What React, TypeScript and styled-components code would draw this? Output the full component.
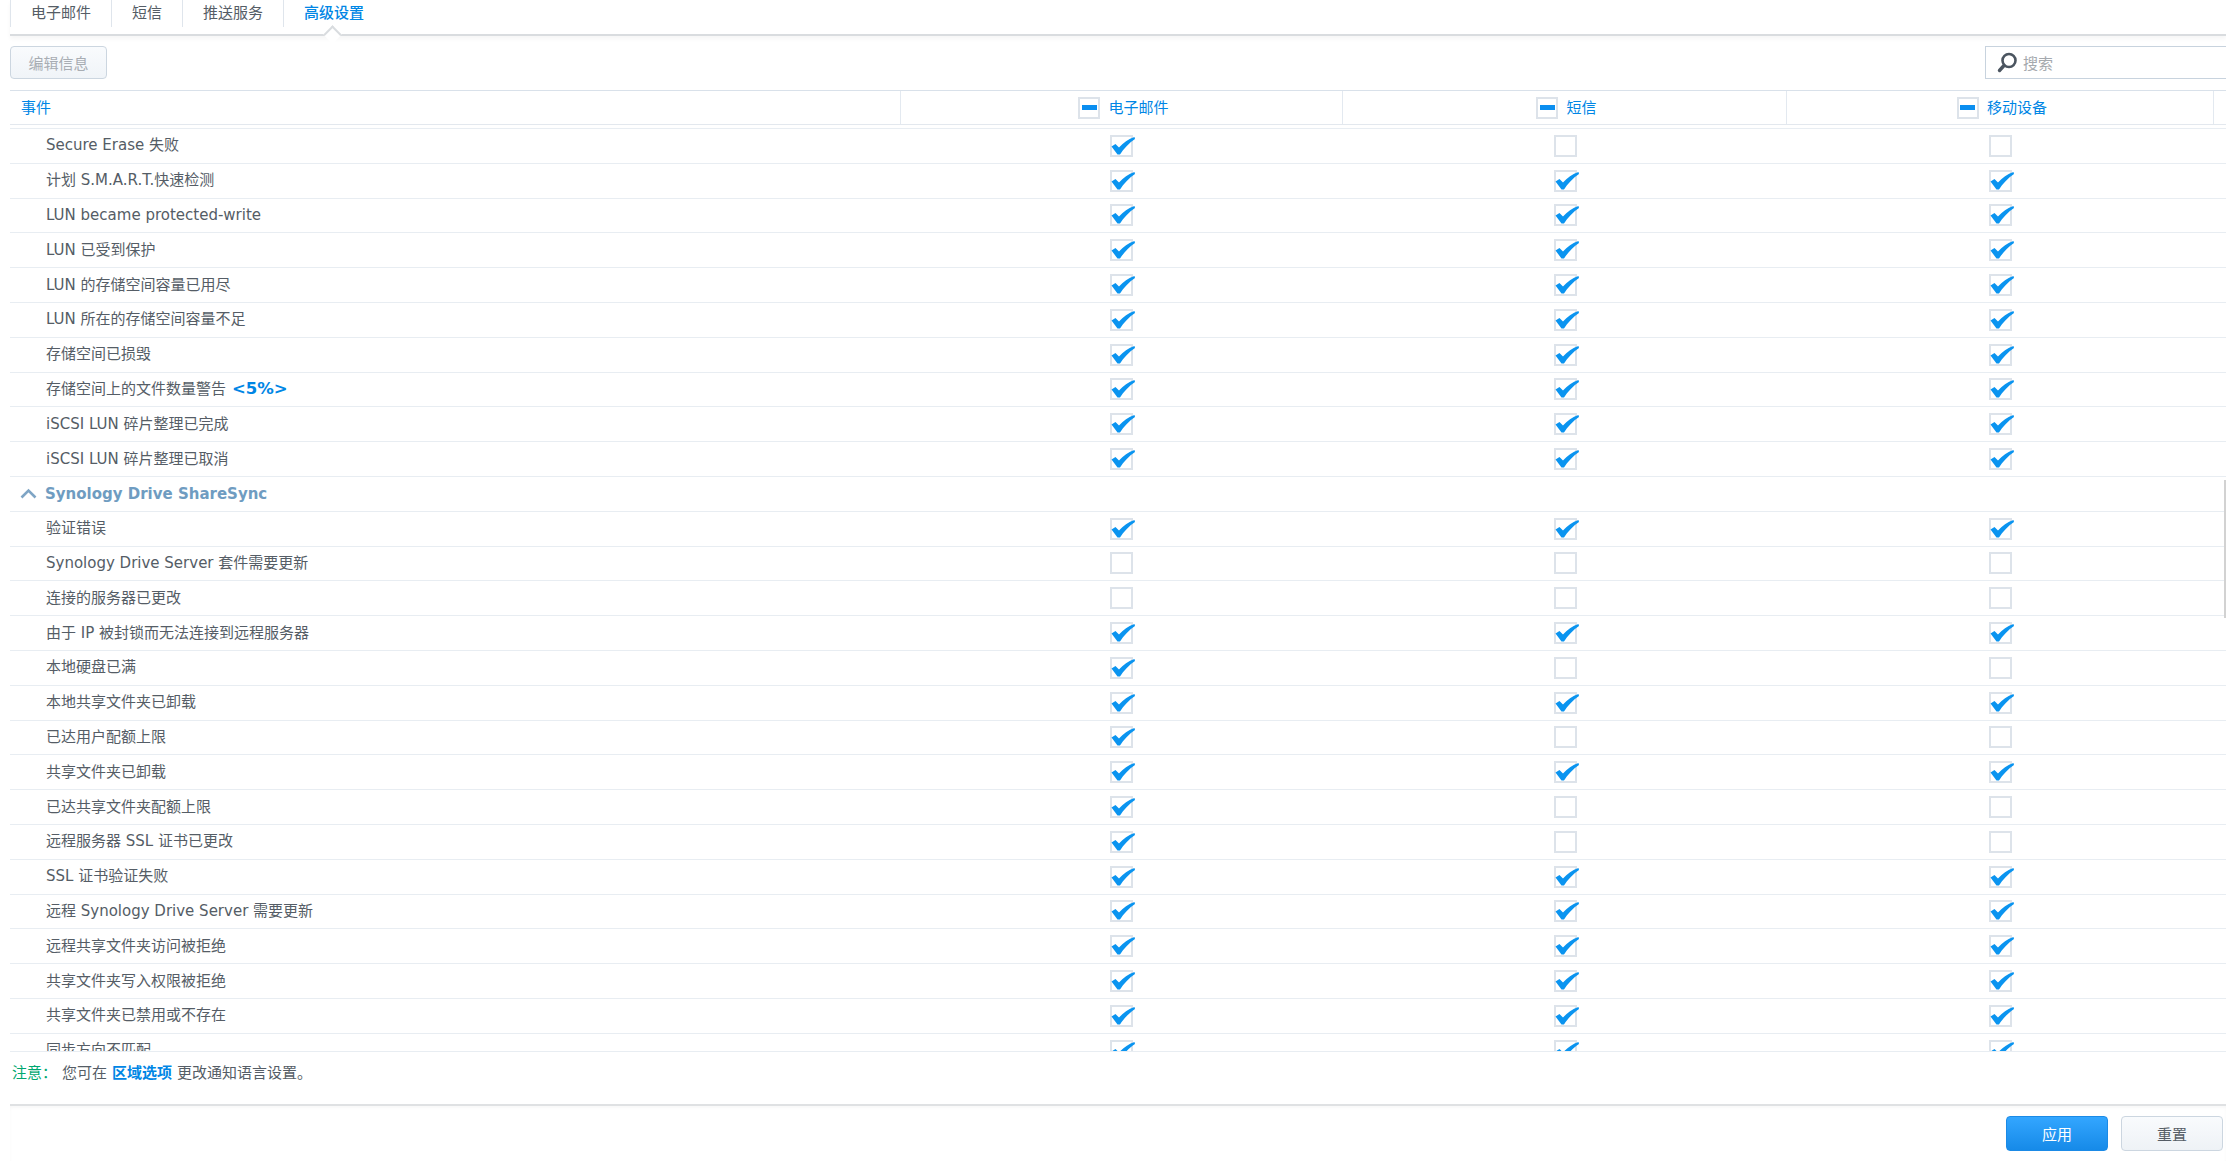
import React from "react";
import styled, { createGlobalStyle } from "styled-components";

const Global = createGlobalStyle`
  html, body { margin: 0; padding: 0; background: #fff; overflow: hidden; }
  * { box-sizing: border-box; }
`;

const FONT = `"DejaVu Sans", "Noto Sans CJK SC", sans-serif`;
const COLS = "891px 442px 444px 427px 1fr";

const Page = styled.div`
  width: 2226px;
  height: 1161px;
  padding-left: 10px;
  display: flex;
  flex-direction: column;
  position: relative;
  overflow: hidden;
  font-family: ${FONT};
  font-size: 15px;
  color: #555d66;
`;

const TabBar = styled.div`
  height: 36px;
  flex: none;
  display: flex;
  align-items: flex-start;
  position: relative;
  border-bottom: 2px solid #d9dcdf;
  box-shadow: 0 3px 4px rgba(0, 0, 0, 0.04);
`;

const Tab = styled.div<{ $active?: boolean }>`
  height: 27px;
  padding: 0 20px 5px;
  display: flex;
  align-items: center;
  border-left: 1px solid #dfe5ec;
  font-size: 15px;
  font-weight: ${(p) => (p.$active ? 500 : 400)};
  color: ${(p) => (p.$active ? "#0086e5" : "#555d66")};
  &:last-of-type { border-right: 1px solid #dfe5ec; }
`;

const Caret = styled.div`
  position: absolute;
  left: 316px;
  bottom: -7px;
  width: 13px;
  height: 13px;
  background: #fff;
  border-left: 2px solid #d9dcdf;
  border-top: 2px solid #d9dcdf;
  transform: rotate(45deg);
`;

const Toolbar = styled.div`
  height: 54px;
  flex: none;
  display: flex;
  align-items: center;
  justify-content: space-between;
  padding-bottom: 2px;
`;

const EditButton = styled.div`
  width: 97px;
  height: 33px;
  display: flex;
  align-items: center;
  justify-content: center;
  border: 1px solid #ccd6e0;
  border-radius: 4px;
  background: linear-gradient(#f9fbfd, #f0f4f8);
  color: #a8adb3;
  font-size: 15px;
`;

const SearchBox = styled.div`
  width: 241px;
  height: 33px;
  display: flex;
  align-items: center;
  gap: 6px;
  padding-left: 11px;
  border: 1px solid #c8d3de;
  border-right: none;
  color: #a5a9ae;
  font-size: 15px;
`;

const HeaderRow = styled.div`
  height: 35px;
  flex: none;
  display: grid;
  grid-template-columns: ${COLS};
  border-top: 1px solid #d9e1ea;
  border-bottom: 1px solid #e3e8ee;
`;

const HeaderLead = styled.div`
  display: flex;
  align-items: center;
  padding: 0 0 2px 11px;
  font-size: 15px;
  color: #0086e5;
  border-right: 1px solid #e3e9f0;
`;

const HeaderCell = styled.div<{ $noLine?: boolean }>`
  display: flex;
  align-items: center;
  justify-content: center;
  gap: 8px;
  padding-left: 4px;
  font-size: 15px;
  color: #0086e5;
  border-right: ${(p) => (p.$noLine ? "none" : "1px solid #e3e9f0")};
`;

const HeaderText = styled.span`
  margin-bottom: 2px;
`;

const Mixed = styled.span`
  width: 22px;
  height: 22px;
  border: 2px solid #dde3ea;
  display: flex;
  align-items: center;
  justify-content: center;
  &::after {
    content: "";
    width: 15px;
    height: 5px;
    background: #0a8ef0;
  }
`;

const Gap = styled.div`
  height: 3px;
  flex: none;
`;

const List = styled.div`
  flex: 1;
  min-height: 0;
  overflow: hidden;
  border-top: 1px solid #e8edf2;
  border-bottom: 1px solid #e8edf2;
`;

const Row = styled.div`
  height: 34.8px;
  display: grid;
  grid-template-columns: ${COLS};
  align-items: center;
  border-bottom: 1px solid #e8edf2;
`;

const Label = styled.div`
  padding: 0 0 1px 36px;
  font-size: 15px;
  line-height: 20px;
  white-space: nowrap;
  color: #555d66;
`;

const Threshold = styled.span`
  margin-left: 6px;
  font-size: 16.5px;
  font-weight: bold;
  color: #0086e5;
`;

const CheckCell = styled.div<{ $nudge?: boolean }>`
  display: flex;
  justify-content: center;
  padding-right: ${(p) => (p.$nudge ? "2px" : "0")};
`;

const Box = styled.span`
  width: 23px;
  height: 22px;
  border: 2px solid #dde3ea;
  position: relative;
  display: block;
`;

const Mark = styled.svg`
  position: absolute;
  left: -4px;
  top: -2px;
  width: 28px;
  height: 22px;
  overflow: visible;
`;

const GroupRow = styled.div`
  height: 34.8px;
  display: flex;
  align-items: center;
  gap: 8px;
  padding-left: 10px;
  border-bottom: 1px solid #e8edf2;
  font-size: 15px;
  font-weight: bold;
  color: #6f9cc1;
`;

const Note = styled.div`
  height: 54px;
  flex: none;
  display: flex;
  align-items: flex-start;
  padding: 9px 0 0 2px;
  font-size: 15px;
  color: #555d66;
  border-bottom: 2px solid #dfe1e3;
`;

const NoteLabel = styled.span`
  width: 50px;
  color: #00a870;
`;

const NoteLink = styled.span`
  margin: 0 5px;
  font-weight: bold;
  color: #0086e5;
`;

const Footer = styled.div`
  height: 55px;
  flex: none;
  display: flex;
  justify-content: flex-end;
  align-items: flex-start;
  gap: 13px;
  padding: 10px 3px 0 0;
  box-shadow: inset 0 2px 3px rgba(0, 0, 0, 0.03);
`;

const Action = styled.div<{ $primary?: boolean }>`
  width: 102px;
  height: 35px;
  display: flex;
  align-items: center;
  justify-content: center;
  border-radius: 4px;
  font-size: 15px;
  border: 1px solid ${(p) => (p.$primary ? "#1b8ae6" : "#ccd6e0")};
  color: ${(p) => (p.$primary ? "#fff" : "#555d66")};
  background: ${(p) =>
    p.$primary ? "linear-gradient(#33a6ff, #168ae8)" : "linear-gradient(#f9fbfd, #eef2f6)"};
`;

const ScrollThumb = styled.div`
  position: absolute;
  right: 0;
  top: 480px;
  width: 2px;
  height: 138px;
  background: #d2d2d2;
`;

const Check = ({ on, nudge }: { on: boolean; nudge?: boolean }) => (
  <CheckCell $nudge={nudge}>
    <Box>
      {on && (
        <Mark viewBox="0 0 28 22">
          <path
            d="M3.5 11.5 L7.5 9 L11 12.5 C15 8 20.5 4 26.5 2 L27 4 C21 8 15.5 14 12 19.5 L9.5 19.5 Z"
            fill="#0a94f0"
          />
        </Mark>
      )}
    </Box>
  </CheckCell>
);

type Item = [string, number, number, number, string?];

const first: Item[] = [
  ["Secure Erase 失败", 1, 0, 0],
  ["计划 S.M.A.R.T.快速检测", 1, 1, 1],
  ["LUN became protected-write", 1, 1, 1],
  ["LUN 已受到保护", 1, 1, 1],
  ["LUN 的存储空间容量已用尽", 1, 1, 1],
  ["LUN 所在的存储空间容量不足", 1, 1, 1],
  ["存储空间已损毁", 1, 1, 1],
  ["存储空间上的文件数量警告", 1, 1, 1, "<5%>"],
  ["iSCSI LUN 碎片整理已完成", 1, 1, 1],
  ["iSCSI LUN 碎片整理已取消", 1, 1, 1],
];

const second: Item[] = [
  ["验证错误", 1, 1, 1],
  ["Synology Drive Server 套件需要更新", 0, 0, 0],
  ["连接的服务器已更改", 0, 0, 0],
  ["由于 IP 被封锁而无法连接到远程服务器", 1, 1, 1],
  ["本地硬盘已满", 1, 0, 0],
  ["本地共享文件夹已卸载", 1, 1, 1],
  ["已达用户配额上限", 1, 0, 0],
  ["共享文件夹已卸载", 1, 1, 1],
  ["已达共享文件夹配额上限", 1, 0, 0],
  ["远程服务器 SSL 证书已更改", 1, 0, 0],
  ["SSL 证书验证失败", 1, 1, 1],
  ["远程 Synology Drive Server 需要更新", 1, 1, 1],
  ["远程共享文件夹访问被拒绝", 1, 1, 1],
  ["共享文件夹写入权限被拒绝", 1, 1, 1],
  ["共享文件夹已禁用或不存在", 1, 1, 1],
  ["同步方向不匹配", 1, 1, 1],
];

const EventRow = ({ item }: { item: Item }) => (
  <Row>
    <Label>
      {item[0]}
      {item[4] && <Threshold>{item[4]}</Threshold>}
    </Label>
    <Check on={!!item[1]} nudge />
    <Check on={!!item[2]} />
    <Check on={!!item[3]} />
  </Row>
);

export default function App() {
  return (
    <Page>
      <Global />
      <TabBar>
        <Tab>电子邮件</Tab>
        <Tab>短信</Tab>
        <Tab>推送服务</Tab>
        <Tab $active>高级设置</Tab>
        <Caret />
      </TabBar>
      <Toolbar>
        <EditButton>编辑信息</EditButton>
        <SearchBox>
          <svg width="20" height="21" viewBox="0 0 20 21">
            <circle cx="12" cy="8.5" r="6.5" fill="none" stroke="#4b5560" strokeWidth="2.6" />
            <path d="M7 13.5 L2.5 18.5" stroke="#4b5560" strokeWidth="3.4" strokeLinecap="round" />
          </svg>
          搜索
        </SearchBox>
      </Toolbar>
      <HeaderRow>
        <HeaderLead>事件</HeaderLead>
        <HeaderCell><Mixed /><HeaderText>电子邮件</HeaderText></HeaderCell>
        <HeaderCell><Mixed /><HeaderText>短信</HeaderText></HeaderCell>
        <HeaderCell><Mixed /><HeaderText>移动设备</HeaderText></HeaderCell>
        <HeaderCell $noLine />
      </HeaderRow>
      <Gap />
      <List>
        {first.map((it) => (
          <EventRow key={it[0]} item={it} />
        ))}
        <GroupRow>
          <svg width="17" height="11" viewBox="0 0 17 11">
            <path d="M1.5 9.5 L8.5 2.5 L15.5 9.5" fill="none" stroke="#7fa5c5" strokeWidth="2.6" />
          </svg>
          Synology Drive ShareSync
        </GroupRow>
        {second.map((it) => (
          <EventRow key={it[0]} item={it} />
        ))}
      </List>
      <Note>
        <NoteLabel>注意：</NoteLabel>
        您可在<NoteLink>区域选项</NoteLink>更改通知语言设置。
      </Note>
      <Footer>
        <Action $primary>应用</Action>
        <Action>重置</Action>
      </Footer>
      <ScrollThumb />
    </Page>
  );
}
